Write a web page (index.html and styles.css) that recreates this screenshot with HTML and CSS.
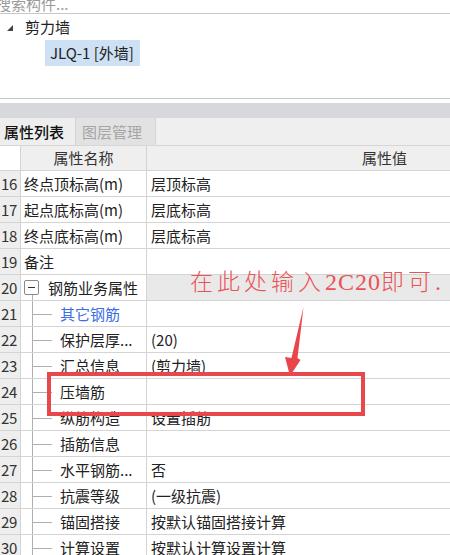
FILE: index.html
```html
<!DOCTYPE html>
<html lang="zh">
<head>
<meta charset="utf-8">
<link rel="stylesheet" href="styles.css">
</head>
<body>
<div class="page">
  <div class="search"><span>搜索构件...</span></div>
  <div class="tree">
    <div class="node"><svg class="tri" width="6" height="6" viewBox="0 0 6 6"><polygon points="6,0 6,6 0,6" fill="#444"/></svg><span>剪力墙</span></div>
    <div class="node child"><span class="sel">JLQ-1 [外墙]</span></div>
  </div>
  <div class="spacer"></div>
  <div class="band"></div>
  <div class="tabs">
    <div class="tab active">属性列表</div>
    <div class="tab off">图层管理</div>
  </div>
  <div class="grid">
    <div class="row head"><div class="num"></div><div class="name">属性名称</div><div class="val">属性值</div></div>
    <div class="row"><div class="num">16</div><div class="name">终点顶标高(m)</div><div class="val">层顶标高</div></div>
    <div class="row"><div class="num">17</div><div class="name">起点底标高(m)</div><div class="val">层底标高</div></div>
    <div class="row"><div class="num">18</div><div class="name">终点底标高(m)</div><div class="val">层底标高</div></div>
    <div class="row"><div class="num">19</div><div class="name">备注</div><div class="val"></div></div>
    <div class="row group"><div class="num">20</div><div class="name"><span class="boxwrap"><span class="box"></span></span><span class="gtext">钢筋业务属性</span></div><div class="val"></div></div>
    <div class="row sub"><div class="num">21</div><div class="name"><span class="branch"></span><span class="blue">其它钢筋</span></div><div class="val"></div></div>
    <div class="row sub"><div class="num">22</div><div class="name"><span class="branch"></span><span>保护层厚...</span></div><div class="val">(20)</div></div>
    <div class="row sub"><div class="num">23</div><div class="name"><span class="branch"></span><span>汇总信息</span></div><div class="val">(剪力墙)</div></div>
    <div class="row sub"><div class="num">24</div><div class="name"><span class="branch"></span><span>压墙筋</span></div><div class="val"></div></div>
    <div class="row sub"><div class="num">25</div><div class="name"><span class="branch"></span><span>纵筋构造</span></div><div class="val">设置插筋</div></div>
    <div class="row sub"><div class="num">26</div><div class="name"><span class="branch"></span><span>插筋信息</span></div><div class="val"></div></div>
    <div class="row sub"><div class="num">27</div><div class="name"><span class="branch"></span><span>水平钢筋...</span></div><div class="val">否</div></div>
    <div class="row sub"><div class="num">28</div><div class="name"><span class="branch"></span><span>抗震等级</span></div><div class="val">(一级抗震)</div></div>
    <div class="row sub"><div class="num">29</div><div class="name"><span class="branch"></span><span>锚固搭接</span></div><div class="val">按默认锚固搭接计算</div></div>
    <div class="row sub"><div class="num">30</div><div class="name"><span class="branch"></span><span>计算设置</span></div><div class="val">按默认计算设置计算</div></div>
  </div>

  <div class="note">在此处输入<span class="latin">2C20</span>即可<span class="latin">.</span></div>
  <svg class="arrow" width="30" height="75" viewBox="280 305 30 75"><polygon points="303.5,307 297.5,358 300.5,360 290,376 285,357 291.5,358" fill="#e8464b"/></svg>
  <div class="redbox"></div>
</div>
</body>
</html>
```
FILE: styles.css
```css
html, body {
  margin: 0;
  padding: 0;
  background: #fff;
}
body {
  width: 450px;
  height: 555px;
  overflow: hidden;
  font-family: "Noto Sans CJK SC", "Noto Sans", sans-serif;
  font-size: 15px;
  color: #222;
}
.page {
  position: relative;
  width: 450px;
  height: 555px;
  overflow: hidden;
}
.search {
  height: 13px;
  border-bottom: 1px solid #c8c8c8;
  overflow: hidden;
}
.search span {
  display: block;
  margin-top: -6px;
  margin-left: -4px;
  line-height: 20px;
  color: #9a9a9a;
  font-size: 15px;
}
.tree {
  height: 84px;
  border-bottom: 1px solid #c8c8c8;
}
.node {
  height: 26px;
  display: flex;
  align-items: center;
  line-height: 26px;
}
.node .tri {
  margin-left: 7px;
  margin-right: 12px;
  margin-top: 2px;
}
.node.child {
  padding-left: 45px;
}
.sel {
  background: #cde0f4;
  padding: 0 6px 0 5px;
  height: 26px;
  line-height: 26px;
  white-space: pre;
}
.spacer {
  height: 4px;
}
.band {
  height: 15px;
  background: #d7d8dc;
}
.tabs {
  display: flex;
  height: 27px;
  background: #efefef;
  border-bottom: 1px solid #d6d6d6;
}
.tab {
  line-height: 27px;
  font-size: 15px;
}
.tab.active {
  width: 75px;
  padding-left: 4px;
  box-sizing: border-box;
  color: #111;
  font-weight: 500;
  background: #eeeeee;
}
.tab.off {
  width: 81px;
  box-sizing: border-box;
  padding-left: 6px;
  color: #a5a5a5;
  background: #e2e2e2;
  border-left: 1px solid #d4d4d4;
  border-right: 1px solid #d4d4d4;
}
.grid {
  width: 622px;
}
.row {
  display: flex;
  height: 25px;
  border-bottom: 1px solid #d4d4d4;
  line-height: 25px;
}
.row .num {
  width: 21px;
  flex: none;
  background: #eeeeee;
  border-right: 1px solid #d4d4d4;
  padding-left: 1px;
  box-sizing: border-box;
  color: #333;
  font-size: 15px;
  letter-spacing: -0.3px;
}
.row .name {
  width: 126px;
  flex: none;
  box-sizing: border-box;
  border-right: 1px solid #d4d4d4;
  padding-left: 3px;
  white-space: nowrap;
  overflow: hidden;
  display: flex;
}
.row .val {
  flex: 1;
  padding-left: 4px;
  white-space: nowrap;
}
.row.head {
  height: 24px;
  line-height: 24px;
}
.row.head .num {
  background: #fff;
}
.row.head .name {
  background: #efefef;
  justify-content: center;
  padding-left: 0;
  color: #333;
}
.row.head .val {
  background: #efefef;
  text-align: center;
  padding-left: 0;
  color: #333;
}
.row.group .val {
  background: #e9e9e9;
}
.boxwrap {
  width: 15px;
  flex: none;
  display: flex;
  align-items: center;
  background: linear-gradient(#b0b0b0, #b0b0b0) 8px 100% / 1px 50% no-repeat;
}
.box {
  width: 13px;
  height: 13px;
  border: 1px solid #8a8a8a;
  border-radius: 2px;
  background: linear-gradient(#333, #333) center / 7px 1px no-repeat, #fff;
}
.gtext {
  margin-left: 9px;
}
.row.sub .name {
  padding-left: 11px;
}
.branch {
  width: 20px;
  flex: none;
  margin-right: 8px;
  height: 26px;
  background:
    linear-gradient(#b0b0b0, #b0b0b0) 0 0 / 1px 100% no-repeat,
    linear-gradient(#b0b0b0, #b0b0b0) 0 50% / 100% 1px no-repeat;
}
.blue {
  color: #3a6ee6;
}
.note {
  position: absolute;
  left: 190px;
  top: 262px;
  font-size: 23px;
  line-height: 36px;
  letter-spacing: 4px;
  color: #ea5257;
  font-weight: 300;
  white-space: nowrap;
}
.note .latin {
  font-family: "Liberation Serif", serif;
  font-size: 24px;
  letter-spacing: 1px;
}
.arrow {
  position: absolute;
  left: 280px;
  top: 305px;
}
.redbox {
  position: absolute;
  left: 47px;
  top: 372px;
  width: 310px;
  height: 36px;
  border: 4px solid #e8474c;
}
```
